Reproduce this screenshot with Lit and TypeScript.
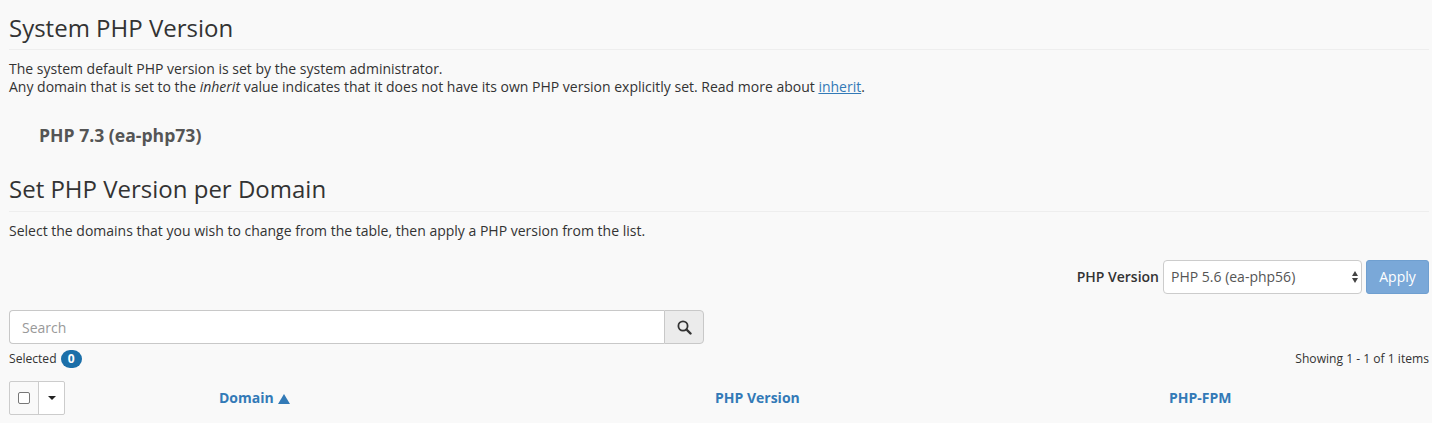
import { LitElement, html, css } from "lit";
import { customElement } from "lit/decorators.js";

@customElement("app-root")
export class AppRoot extends LitElement {
  static styles = css`
    :host { display: block; height: 423px; overflow: hidden; background: #f9f9f9; color: #333; font-family: "Open Sans", sans-serif; font-size: 14px; line-height: 18px; }
    .page { padding: 0 3px 0 9px; display: flex; flex-direction: column; }
    .t1 { border-bottom: 1px solid #eee; height: 50px; padding-top: 13px; box-sizing: border-box; font-size: 24px; line-height: 30px; }
    .desc { margin: 10px 0 0; }
    .current { margin: 28px 0 0 30px; font-size: 17.6px; font-weight: 700; line-height: 22px; color: #555; }
    .t2 { border-bottom: 1px solid #eee; height: 40px; box-sizing: border-box; margin-top: 26px; padding-top: 2px; font-size: 24px; line-height: 30px; }
    .select-row { margin-top: 20px; display: flex; justify-content: flex-end; align-items: center; gap: 4px; height: 34px; }
    label { font-weight: 600; color: #333; }
    .sel { width: 199px; height: 34px; box-sizing: border-box; border: 1px solid #ccc; border-radius: 4px; background: #fff; color: #555; padding: 0 3px 0 7px; display: flex; justify-content: space-between; align-items: center; }
    .apply { width: 63px; height: 34px; box-sizing: border-box; background: #7aa8d8; border: 1px solid #6f9fd0; border-radius: 3px; color: #fff; display: grid; place-items: center; }
    .search { margin-top: 16px; width: 695px; height: 34px; display: flex; box-sizing: border-box; }
    .input { flex: 1; border: 1px solid #c8c8c8; border-right: 0; border-radius: 4px 0 0 4px; background: #fff; color: #999; line-height: 33px; padding-left: 12px; }
    .sbtn { width: 40px; box-sizing: border-box; border: 1px solid #c8c8c8; border-radius: 0 4px 4px 0; background: #ebebeb; display: grid; place-items: center; }
    .status { display: flex; justify-content: space-between; align-items: center; margin-top: 6px; height: 18px; font-size: 12.1px; line-height: 18px; color: #333; }
    .left { display: flex; align-items: center; gap: 4px; }
    .badge { background: #1b6fa9; color: #fff; font-weight: 700; font-size: 12px; line-height: 18px; height: 18px; width: 21px; border-radius: 9px; text-align: center; }
    .head { display: grid; grid-template-columns: 210px 496px 454px 1fr; align-items: center; margin-top: 13px; height: 34px; color: #337ab7; font-weight: 700; }
    .tools { display: flex; width: 56px; height: 34px; box-sizing: border-box; border: 1px solid #ccc; border-radius: 2px; }
    .check { width: 28px; border-right: 1px solid #ccc; display: grid; place-items: center; }
    .box { width: 10px; height: 10px; border: 1px solid #777; border-radius: 2px; background: #fff; }
    .caret { flex: 1; background: #fff; display: grid; place-items: center; border-radius: 0 2px 2px 0; }
    .tri { display: inline-block; vertical-align: -1px; margin-left: 4px; }
    a { color: #337ab7; }
    svg { display: block; }
    .tri svg { display: inline; }
  `;

  render() {
    return html`<div class="page">
      <div class="t1">System PHP Version</div>
      <div class="desc">The system default PHP version is set by the system administrator.<br />Any domain that is set to the <em>inherit</em> value indicates that it does not have its own PHP version explicitly set. Read more about <a href="#">inherit</a>.</div>
      <div class="current">PHP 7.3 (ea-php73)</div>
      <div class="t2">Set PHP Version per Domain</div>
      <div class="desc">Select the domains that you wish to change from the table, then apply a PHP version from the list.</div>
      <div class="select-row">
        <label>PHP Version</label>
        <div class="sel"><span>PHP 5.6 (ea-php56)</span>
          <svg width="6" height="12" viewBox="0 0 6 12"><path d="M3 0 6 5H0zM3 12 0 7h6z" fill="#444"/></svg></div>
        <div class="apply">Apply</div>
      </div>
      <div class="search">
        <div class="input">Search</div>
        <div class="sbtn"><svg width="15" height="15" viewBox="0 0 15 15"><circle cx="6" cy="6" r="4.6" fill="none" stroke="#333" stroke-width="1.8"/><path d="M9.5 9.5 13.5 13.5" stroke="#333" stroke-width="2.4" stroke-linecap="round"/></svg></div>
      </div>
      <div class="status">
        <div class="left"><span>Selected</span><span class="badge">0</span></div>
        <div>Showing 1 - 1 of 1 items</div>
      </div>
      <div class="head">
        <div class="tools"><div class="check"><div class="box"></div></div><div class="caret"><svg width="8" height="4" viewBox="0 0 8 4"><path d="M0 0h8L4 4z" fill="#222"/></svg></div></div>
        <div>Domain<span class="tri"><svg width="12" height="10" viewBox="0 0 12 10"><path d="M6 0 12 10H0z" fill="#337ab7"/></svg></span></div>
        <div>PHP Version</div>
        <div>PHP-FPM</div>
      </div>
    </div>`;
  }
}
